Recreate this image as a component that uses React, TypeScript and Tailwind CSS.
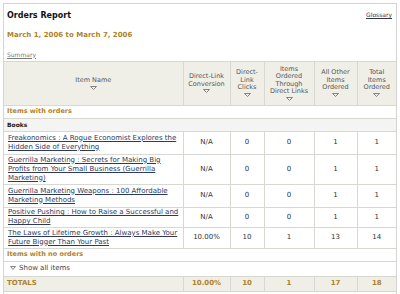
import React from "react";

const rows = [
  { name: "Freakonomics : A Rogue Economist Explores the Hidden Side of Everything", conv: "N/A", clicks: "0", through: "0", other: "1", total: "1", h: "h-[23px]" },
  { name: "Guerrilla Marketing : Secrets for Making Big Profits from Your Small Business (Guerrilla Marketing)", conv: "N/A", clicks: "0", through: "0", other: "1", total: "1", h: "h-[30px]" },
  { name: "Guerrilla Marketing Weapons : 100 Affordable Marketing Methods", conv: "N/A", clicks: "0", through: "0", other: "1", total: "1", h: "h-[23px]" },
  { name: "Positive Pushing : How to Raise a Successful and Happy Child", conv: "N/A", clicks: "0", through: "0", other: "1", total: "1", h: "h-[20px]" },
  { name: "The Laws of Lifetime Growth : Always Make Your Future Bigger Than Your Past", conv: "10.00%", clicks: "10", through: "1", other: "13", total: "14", h: "h-[21px]" },
];

const headers = [
  ["Direct-Link", "Conversion"],
  ["Direct-", "Link", "Clicks"],
  ["Items", "Ordered", "Through", "Direct Links"],
  ["All Other", "Items", "Ordered"],
  ["Total", "Items", "Ordered"],
];

function Arrow() {
  return (
    <svg width="7" height="4" viewBox="0 0 7 4" className="mx-auto mt-[1px]">
      <path d="M0.5 0.5 L6.5 0.5 L3.5 3.5 Z" fill="none" stroke="#777" strokeWidth="0.9" />
    </svg>
  );
}

export default function App() {
  return (
    <div className="w-[400px] h-[294px] bg-white pt-[3px] px-[3px] font-['DejaVu_Sans',_Verdana,_sans-serif] text-[7px] text-[#333] overflow-hidden">
      <div className="border border-[#d4d4d0] h-[300px]">
        <div className="flex justify-between px-[3px] pt-[6px]">
          <h1 className="text-[8px] font-bold text-[#111]">Orders Report</h1>
          <a className="text-[6px] text-[#334] underline mr-[1px]">Glossary</a>
        </div>
        <div className="px-[3px] mt-[8px] text-[7px] font-bold text-[#b0822a]">
          March 1, 2006 to March 7, 2006
        </div>
        <div className="px-[3px] mt-[9px] text-[6px] text-[#777] underline">Summary</div>
        <table className="mt-[2px] w-full table-fixed border-collapse">
          <colgroup>
            <col className="w-[179px]" />
            <col className="w-[47px]" />
            <col className="w-[34px]" />
            <col className="w-[50px]" />
            <col className="w-[43px]" />
            <col />
          </colgroup>
          <thead>
            <tr className="h-[44px] bg-[#efefe8] text-[#555] text-[6.5px]">
              <th className="h-[44px] border border-[#d8d8d2] border-l-0 font-normal text-center">
                <div>Item Name</div>
                <Arrow />
              </th>
              {headers.map((lines, i) => (
                <th key={i} className="h-[44px] border border-[#d8d8d2] font-normal text-center leading-[7.5px] last:border-r-0">
                  {lines.map((l) => (
                    <div key={l}>{l}</div>
                  ))}
                  <Arrow />
                </th>
              ))}
            </tr>
          </thead>
          <tbody>
            <tr className="h-[13px]">
              <td colSpan={6} className="h-[13px] border-b border-[#d8d8d2] px-[3px] font-bold text-[#b0822a] text-[6.5px]">
                Items with orders
              </td>
            </tr>
            <tr className="h-[13px] bg-[#f4f4f2]">
              <td colSpan={6} className="h-[13px] border-b border-[#d8d8d2] px-[3px] font-bold text-[#222] text-[6px]">
                Books
              </td>
            </tr>
            {rows.map((r) => (
              <tr key={r.name} className={r.h}>
                <td className="border border-l-0 border-[#d8d8d2] pl-[4px] pr-[2px] leading-[9px]">
                  <a className="text-[#2e3a5c] underline">{r.name}</a>
                </td>
                <td className="border border-[#d8d8d2] text-center text-[#333]">{r.conv}</td>
                <td className="border border-[#d8d8d2] text-center text-[#333]">{r.clicks}</td>
                <td className="border border-[#d8d8d2] text-center text-[#333]">{r.through}</td>
                <td className="border border-[#d8d8d2] text-center text-[#333]">{r.other}</td>
                <td className="border border-r-0 border-[#d8d8d2] text-center text-[#333]">{r.total}</td>
              </tr>
            ))}
            <tr className="h-[13px]">
              <td colSpan={6} className="h-[13px] border-b border-[#d8d8d2] px-[3px] font-bold text-[#b0822a] text-[6.5px]">
                Items with no orders
              </td>
            </tr>
            <tr className="h-[15px]">
              <td colSpan={6} className="h-[15px] border-b border-[#d8d8d2] px-[6px] text-[#444] text-[7px]">
                <span className="inline-flex items-center gap-[3px]">
                  <svg width="6" height="4" viewBox="0 0 6 4">
                    <path d="M0.5 0.5 L5.5 0.5 L3 3.5 Z" fill="none" stroke="#777" strokeWidth="0.9" />
                  </svg>
                  Show all items
                </span>
              </td>
            </tr>
            <tr className="h-[15px] bg-[#efefe8] font-bold text-[#b0822a]">
              <td className="h-[15px] border-b border-r border-[#d8d8d2] px-[3px]">TOTALS</td>
              <td className="border border-[#d8d8d2] text-center">10.00%</td>
              <td className="border border-[#d8d8d2] text-center">10</td>
              <td className="border border-[#d8d8d2] text-center">1</td>
              <td className="border border-[#d8d8d2] text-center">17</td>
              <td className="border border-r-0 border-[#d8d8d2] text-center">18</td>
            </tr>
          </tbody>
        </table>
      </div>
    </div>
  );
}
